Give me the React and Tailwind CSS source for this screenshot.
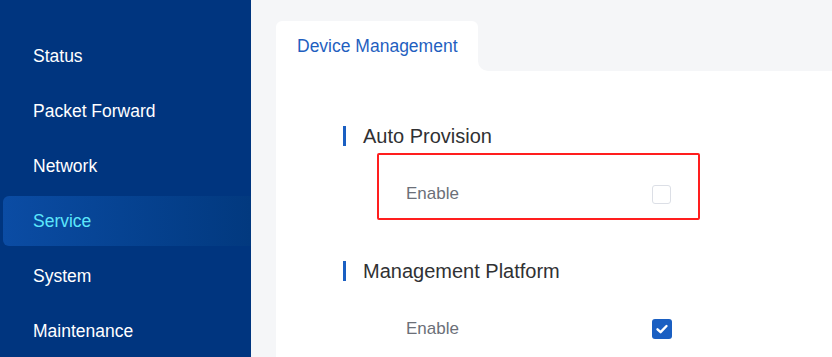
import React from 'react';

const menu = ['Status', 'Packet Forward', 'Network', 'Service', 'System', 'Maintenance'];

const Checkbox = ({ checked }) =>
  checked ? (
    <span className="flex h-[20px] w-[20px] items-center justify-center rounded-[3px] bg-[#1a5fc2]">
      <svg width="14" height="14" viewBox="0 0 14 14" fill="none">
        <polyline points="2.5,7.3 5.6,10.2 11.5,4" stroke="#fff" strokeWidth="2.4" strokeLinecap="round" strokeLinejoin="round" />
      </svg>
    </span>
  ) : (
    <span className="block h-[19px] w-[19px] rounded-[3px] border border-[#dcdfe6] bg-white" />
  );

const Heading = ({ children }) => (
  <div className="flex h-[28px] items-center">
    <span className="h-[20px] w-[3px] bg-[#1a5fc2]" />
    <span className="ml-[17px] text-[20px] text-[#303133]">{children}</span>
  </div>
);

const EnableRow = ({ checked, outlined }) => (
  <div
    className={
      outlined
        ? 'ml-[34px] w-[323px] rounded-[2px] border-2 border-[#ff1e1e] pl-[27px] pr-[26px] pt-[29px] pb-[14px]'
        : 'ml-[34px] w-[323px] border-2 border-transparent pl-[27px] pr-[26px]'
    }
  >
    <div className="flex h-[20px] items-center">
      <span className="w-[246px] text-[17px] text-[#6b6f78]">Enable</span>
      <Checkbox checked={checked} />
    </div>
  </div>
);

export default function App() {
  return (
    <div className="flex h-[357px] w-[832px] overflow-hidden bg-white" style={{ fontFamily: '"Liberation Sans", Arial, sans-serif' }}>
      <aside className="w-[251px] shrink-0 bg-[#00357f] pt-[31px] pl-[3px]">
        <nav className="flex flex-col gap-[5px]">
          {menu.map((item) => (
            <div
              key={item}
              className={
                item === 'Service'
                  ? 'flex h-[50px] items-center rounded-l-[6px] bg-gradient-to-r from-[#0b4ca4] to-[#02397f] pl-[30px] text-[17.5px] text-[#5ce6fb]'
                  : 'flex h-[50px] items-center pl-[30px] text-[17.5px] text-white'
              }
            >
              {item}
            </div>
          ))}
        </nav>
      </aside>

      <main className="flex flex-1 flex-col bg-[#f5f6f8] pl-[25px] pt-[21px]">
        <div className="flex h-[50px] shrink-0">
          <div className="flex w-[202px] items-center rounded-t-[6px] bg-white pl-[21px] text-[17.5px] text-[#1f5fbf]">
            Device Management
          </div>
          <div className="flex-1 bg-white">
            <div className="h-full rounded-bl-[10px] bg-[#f5f6f8]" />
          </div>
        </div>

        <div className="flex-1 bg-white pl-[67px] pt-[51px]">
          <Heading>Auto Provision</Heading>
          <div className="mt-[3px]">
            <EnableRow outlined checked={false} />
          </div>

          <div className="mt-[37px]">
            <Heading>Management Platform</Heading>
          </div>
          <div className="mt-[32px]">
            <EnableRow checked />
          </div>
        </div>
      </main>
    </div>
  );
}
